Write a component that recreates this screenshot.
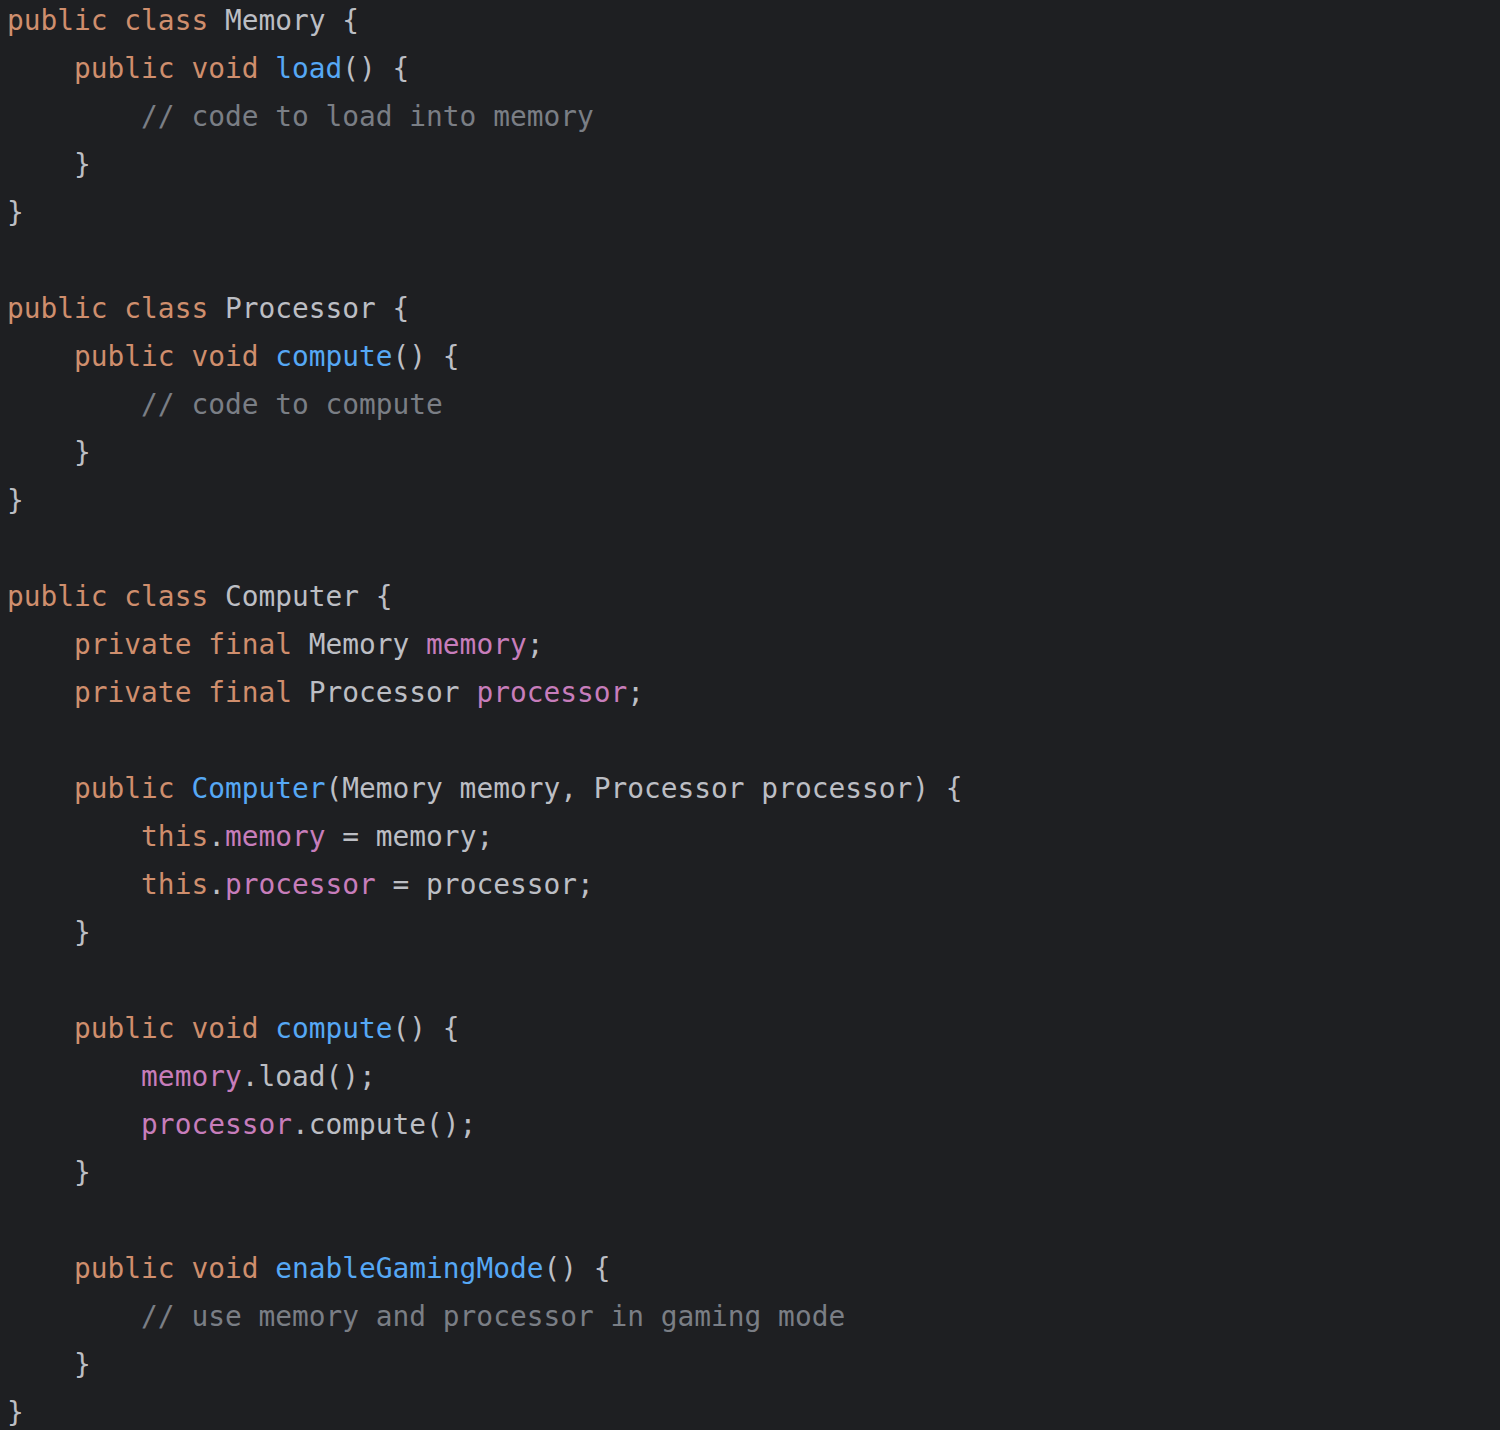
const K = "text-[#cf8e6d]";
const F = "text-[#56a8f5]";
const T = "text-[#bcbec4]";
const C = "text-[#7a7e85]";
const P = "text-[#c77dbb]";

// each line: list of [class, text]
const lines = [
  [[K, "public class "], [T, "Memory {"]],
  [[K, "    public void "], [F, "load"], [T, "() {"]],
  [[C, "        // code to load into memory"]],
  [[T, "    }"]],
  [[T, "}"]],
  [],
  [[K, "public class "], [T, "Processor {"]],
  [[K, "    public void "], [F, "compute"], [T, "() {"]],
  [[C, "        // code to compute"]],
  [[T, "    }"]],
  [[T, "}"]],
  [],
  [[K, "public class "], [T, "Computer {"]],
  [[K, "    private final "], [T, "Memory "], [P, "memory"], [T, ";"]],
  [[K, "    private final "], [T, "Processor "], [P, "processor"], [T, ";"]],
  [],
  [[K, "    public "], [F, "Computer"], [T, "(Memory memory, Processor processor) {"]],
  [[K, "        this"], [T, "."], [P, "memory"], [T, " = memory;"]],
  [[K, "        this"], [T, "."], [P, "processor"], [T, " = processor;"]],
  [[T, "    }"]],
  [],
  [[K, "    public void "], [F, "compute"], [T, "() {"]],
  [[P, "        memory"], [T, ".load();"]],
  [[P, "        processor"], [T, ".compute();"]],
  [[T, "    }"]],
  [],
  [[K, "    public void "], [F, "enableGamingMode"], [T, "() {"]],
  [[C, "        // use memory and processor in gaming mode"]],
  [[T, "    }"]],
  [[T, "}"]],
];

export default function App() {
  return (
    <div className="w-[1500px] h-[1430px] bg-[#1e1f22] overflow-hidden">
      <pre
        className="pl-[7px] -mt-[3px] text-[27.85px] leading-[48px]"
        style={{ fontFamily: '"DejaVu Sans Mono", "Liberation Mono", monospace' }}
      >
        {lines.map((parts, i) => (
          <div key={i} className="h-[48px] whitespace-pre">
            {parts.map(([cls, txt], j) => (
              <span key={j} className={cls}>
                {txt}
              </span>
            ))}
          </div>
        ))}
      </pre>
    </div>
  );
}
